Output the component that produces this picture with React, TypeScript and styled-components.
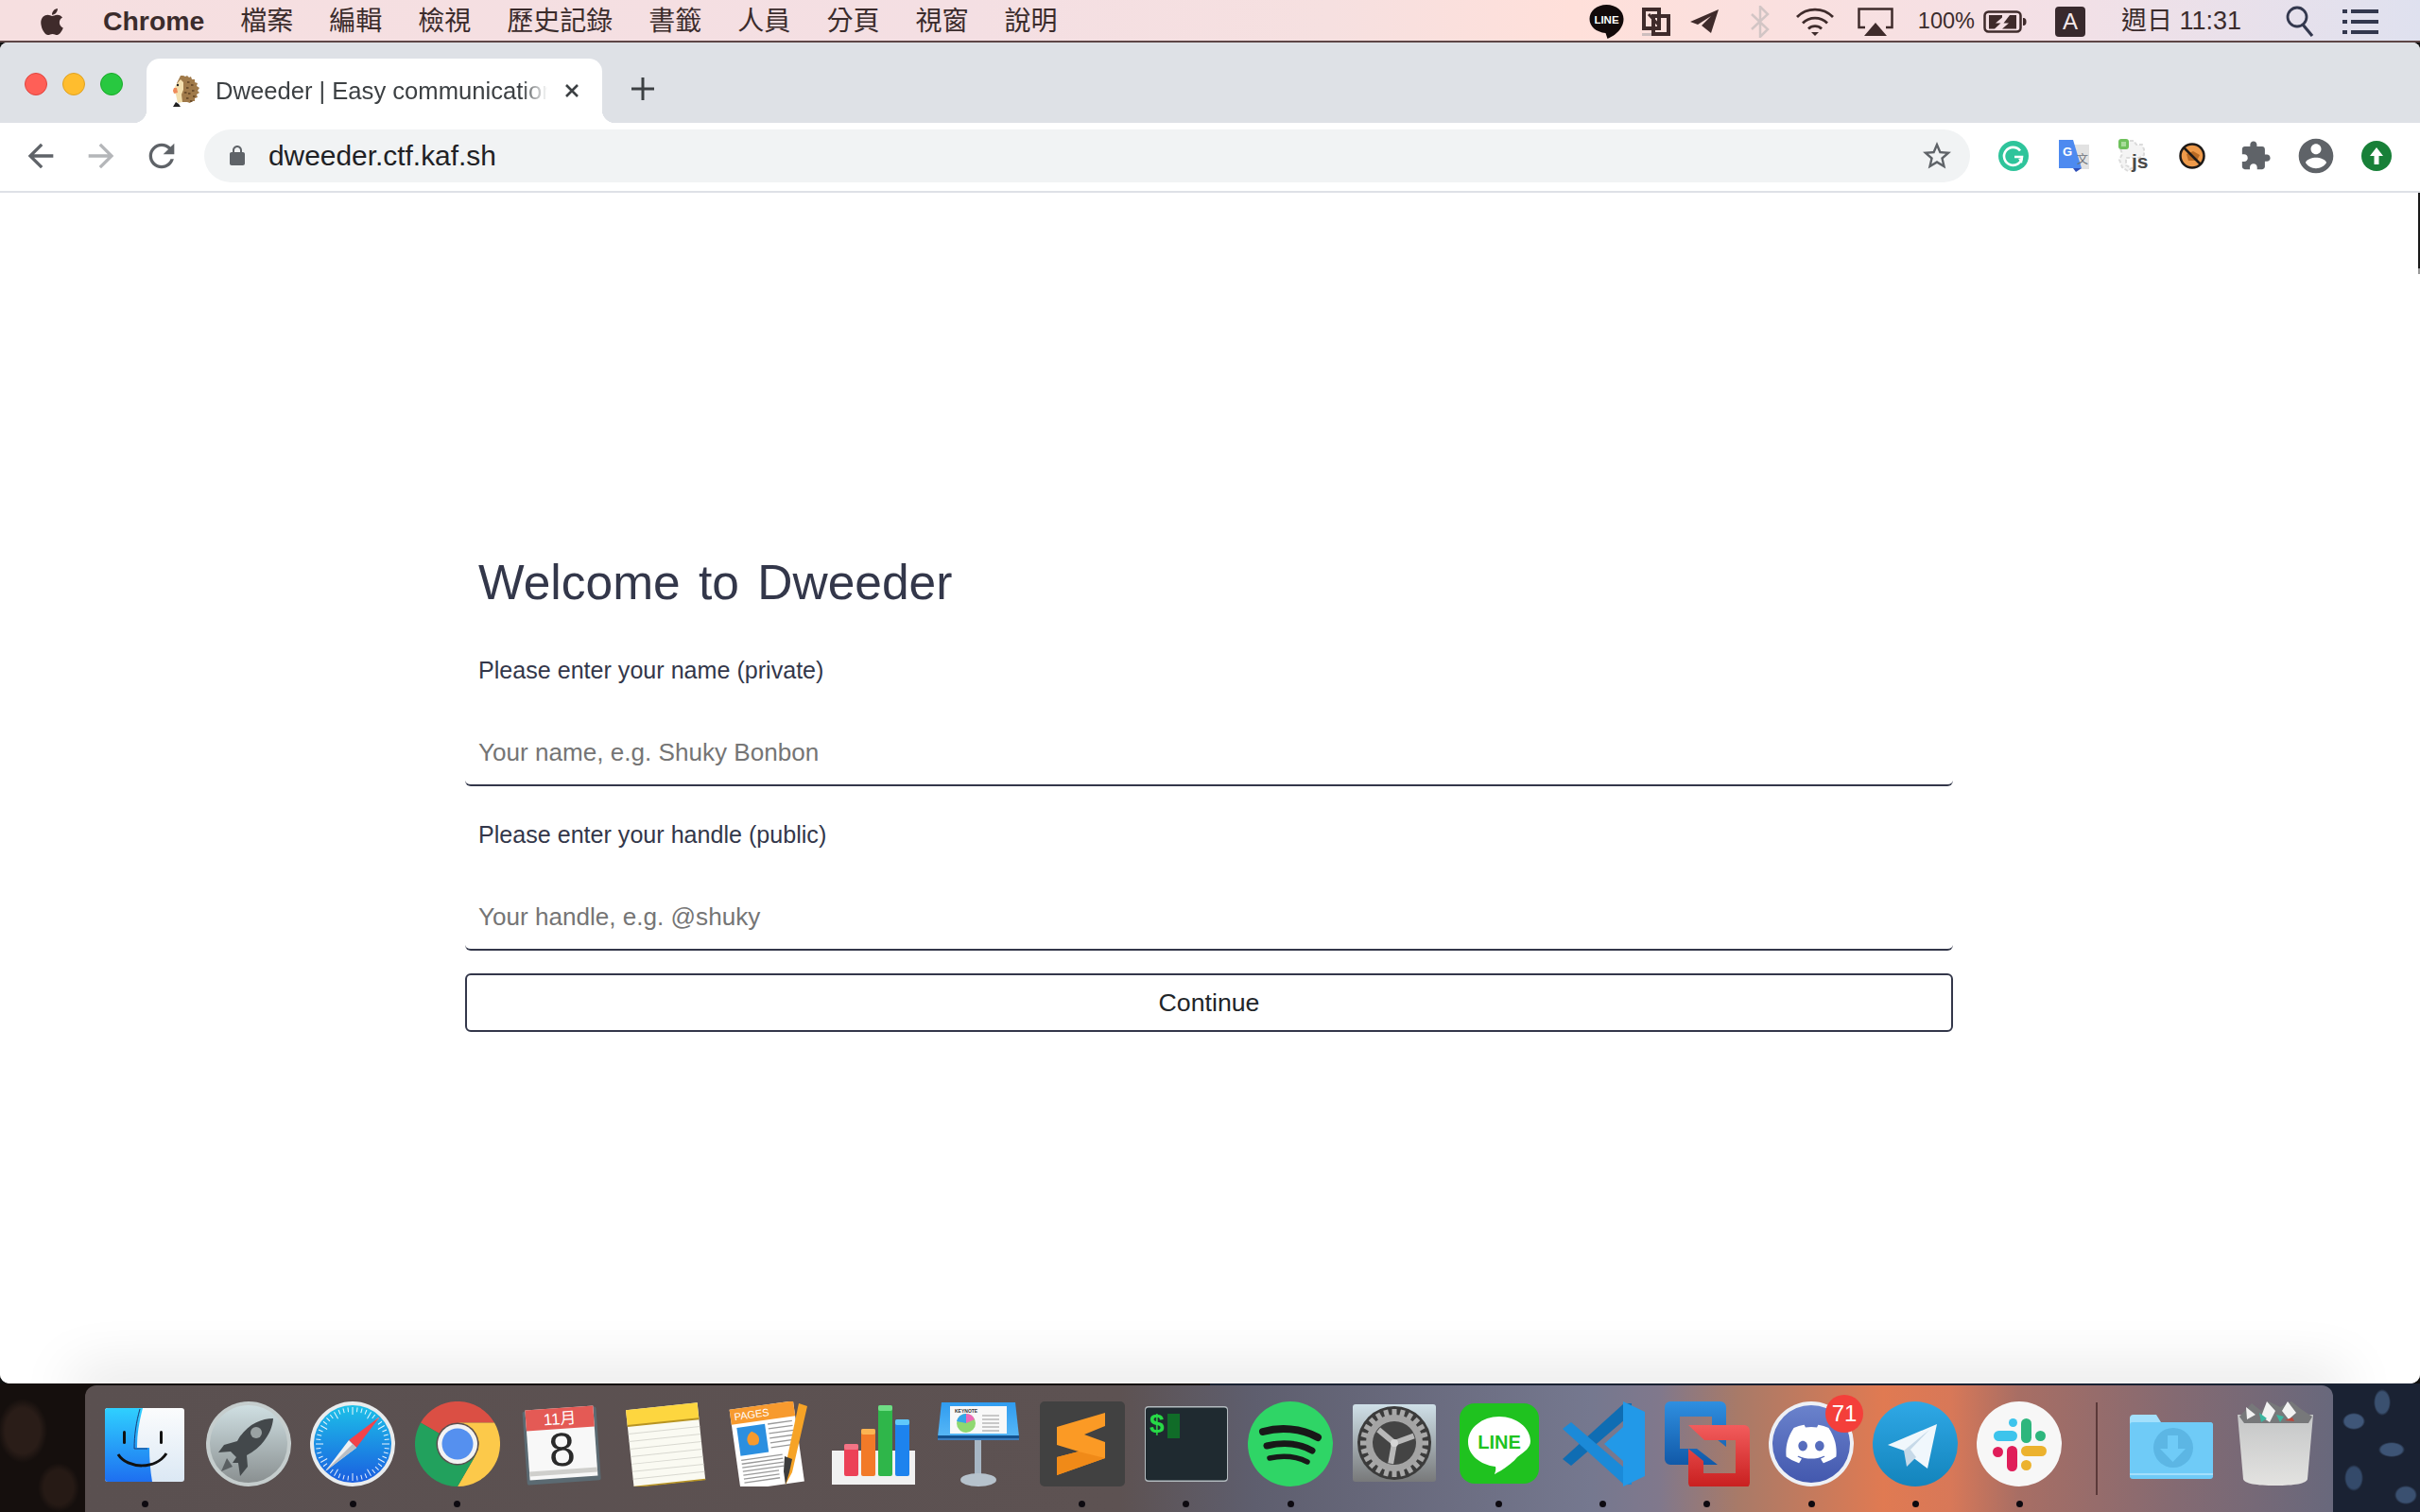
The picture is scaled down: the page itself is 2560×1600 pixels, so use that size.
import React from 'react';
import styled, { createGlobalStyle } from 'styled-components';
import { FaApple, FaDiscord } from 'react-icons/fa';

const SANS = '"Liberation Sans", Arial, sans-serif';
const CJK = '"Liberation Sans", "Noto Sans CJK TC", sans-serif';
const INK = '#33374a';

const Global = createGlobalStyle`
  html, body { margin: 0; padding: 0; background: #111; overflow: hidden; }
  * { box-sizing: border-box; }
  input::placeholder { color: #757575; opacity: 1; }
`;

const Desktop = styled.div`
  width: 2560px; height: 1600px; display: flex; flex-direction: column; overflow: hidden;
  font-family: ${SANS};
`;

/* ---------- mac menu bar ---------- */
const MenuBar = styled.header`
  height: 45px; flex: none; display: flex; align-items: center; padding: 2px 44px 0 39px;
  background: linear-gradient(90deg, #f6dfe0 0%, #f4dfe3 40%, #f6e0e0 55%, #ffe0da 65%, #f3e0e6 85%, #dfe1ef 100%);
  border-bottom: 2px solid #5d4646; color: #3b2c2c;
`;
const MenuLeft = styled.nav`
  display: flex; align-items: center; gap: 38px; font: 28px/43px ${CJK};
`;
const MenuApp = styled.span` font-weight: 700; font-size: 28.4px; `;
const MenuStatus = styled.div` margin-left: auto; display: flex; align-items: center; height: 43px; `;
const StatusItem = styled.span<{ $ml: number }>`
  margin-left: ${p => p.$ml}px; display: flex; align-items: center; line-height: 1;
`;
const StatusText = styled(StatusItem)<{ $size: number }>`
  font: ${p => p.$size}px/43px ${CJK}; white-space: nowrap;
`;
const InputBadge = styled(StatusItem)`
  width: 32px; height: 32px; border-radius: 4px; background: #38292d; color: #f4e8ea;
  font: 24px/32px ${SANS}; justify-content: center;
`;

/* ---------- browser window ---------- */
const Window = styled.section`
  height: 1419px; flex: none; display: flex; flex-direction: column; overflow: hidden;
  border-radius: 8px 8px 10px 10px; background: #fff;
`;
const TabStrip = styled.div`
  height: 85px; flex: none; display: flex; align-items: flex-start; background: #dee1e6;
`;
const Lights = styled.div` display: flex; gap: 16px; padding: 32px 0 0 26px; `;
const Light = styled.span<{ $c: string; $b: string }>`
  width: 24px; height: 24px; border-radius: 50%; background: ${p => p.$c}; border: 1px solid ${p => p.$b};
`;
const Tab = styled.div`
  position: relative; margin: 17px 0 0 25px; width: 482px; height: 68px; background: #fff;
  border-radius: 14px 14px 0 0; display: flex; align-items: center; padding-left: 26px;
  &::before, &::after {
    content: ''; position: absolute; bottom: 0; width: 14px; height: 14px;
  }
  &::before { left: -14px; background: radial-gradient(circle at 0 0, transparent 14px, #fff 14.5px); }
  &::after { right: -14px; background: radial-gradient(circle at 100% 0, transparent 14px, #fff 14.5px); }
`;
const TabTitle = styled.span`
  margin-left: 17px; width: 351px; overflow: hidden; white-space: nowrap; font-size: 25.6px; line-height: 34px;
  color: #3c4043; -webkit-mask-image: linear-gradient(90deg, #000 92%, transparent 100%);
  mask-image: linear-gradient(90deg, #000 92%, transparent 100%);
`;
const TabClose = styled.span` margin-left: 18px; display: flex; `;
const NewTab = styled.span` margin: 36px 0 0 30px; display: flex; `;

const Toolbar = styled.div`
  height: 74px; flex: none; display: flex; align-items: center; padding: 0 0 2px 11px;
  background: #fff; border-bottom: 2px solid #dee1e6;
`;
const NavButton = styled.span` width: 64px; display: flex; justify-content: center; `;
const Omnibox = styled.div`
  margin: 0 14px 0 13px; width: 1868px; height: 56px; border-radius: 28px; background: #f1f3f4;
  display: flex; align-items: center; padding: 0 17px 0 23px;
`;
const Url = styled.span` margin-left: 21px; font-size: 29.9px; color: #202124; flex: 1; `;
const ExtButton = styled.span<{ $nudge?: number }>`
  width: 64px; height: 48px; display: flex; align-items: center; justify-content: center;
  padding-right: ${p => p.$nudge ?? 0}px;
`;

const Page = styled.main`
  position: relative; flex: 1; display: flex; justify-content: center; padding: 382px 2px 0 0; background: #fff;
`;
const ScrollMark = styled.span`
  position: absolute; top: 0; right: 0; width: 2px; height: 86px;
  background: linear-gradient(#1a1a1a 93%, #999 93%);
`;
const DockShadow = styled.span`
  position: absolute; left: 90px; right: 92px; bottom: -12px; height: 12px;
  box-shadow: 0 0 60px 12px rgba(0, 0, 0, 0.13);
`;
const Form = styled.form` width: 1574px; display: flex; flex-direction: column; color: ${INK}; `;
const Heading = styled.h1`
  margin: 0 0 43px 14px; font-size: 51.5px; word-spacing: 5px; line-height: 60px; font-weight: 400;
`;
const FieldLabel = styled.label`
  display: block; margin: 0 0 30px 14px; font-size: 25.1px; line-height: 40px;
`;
const TextInput = styled.input`
  display: block; width: 100%; height: 73px; margin-bottom: 31px; padding: 4px 14px 0; border: 0;
  border-bottom: 2px solid ${INK}; border-radius: 6px; background: #fff; outline: none;
  font: 26.1px ${SANS}; color: ${INK};
`;
const SubmitButton = styled.button`
  margin-top: -7px; height: 62px; border: 2px solid ${INK}; border-radius: 6px; background: #fff;
  font: 26.7px ${SANS}; color: #212529; padding: 0;
`;

/* ---------- dock ---------- */
const Wallpaper = styled.div`
  flex: 1; display: flex; padding: 2px 92px 0 90px; position: relative;
  background:
    radial-gradient(ellipse 26px 34px at 24px 50px, #2a1d18 70%, transparent 100%),
    radial-gradient(ellipse 22px 26px at 62px 110px, #261a15 70%, transparent 100%),
    radial-gradient(ellipse 12px 9px at 2490px 40px, #3f5678 80%, transparent 100%),
    radial-gradient(ellipse 9px 14px at 2520px 20px, #3a506f 80%, transparent 100%),
    radial-gradient(ellipse 14px 8px at 2530px 70px, #3d5475 80%, transparent 100%),
    radial-gradient(ellipse 10px 14px at 2490px 100px, #344a6a 80%, transparent 100%),
    radial-gradient(ellipse 12px 10px at 2545px 118px, #3a5070 80%, transparent 100%),
    linear-gradient(90deg, #150f0d 0%, #150f0d 50%, #1a2233 50%, #1a2233 100%);
`;
const Dock = styled.nav`
  flex: 1; display: flex; align-items: flex-start; padding: 17px 0 0 8px; border-radius: 12px 12px 0 0;
  background: linear-gradient(90deg, #5a5050 0%, #5d5252 46%, #5e5e6e 52%, #75788f 67%, #80788c 70%, #a87a68 73.5%, #e07a52 80%, #d87858 83%, #a86e64 86%, #846a72 93%, #68687c 100%);
`;
const DockCell = styled.div`
  width: 110.2px; flex: none; display: flex; flex-direction: column; align-items: center; gap: 15px;
`;
const DockIconBox = styled.div` position: relative; width: 90px; height: 90px; svg { display: block; } `;
const RunDot = styled.span<{ $on: boolean }>`
  width: 7px; height: 7px; border-radius: 50%; background: ${p => (p.$on ? '#0d0a10' : 'transparent')};
`;
const DockDivider = styled.span`
  width: 2px; height: 98px; margin: 1px 23px 0 25px; background: rgba(60, 30, 30, 0.65); flex: none;
`;
const Badge = styled.span`
  position: absolute; left: 60px; top: -7px; width: 40px; height: 40px; border-radius: 50%;
  background: #f43f3a; color: #fff; font: 24px/40px ${SANS}; text-align: center;
`;

/* ---------- small browser icons ---------- */
const Mat = ({ d, size, color }: { d: string; size: number; color: string }) => (
  <svg width={size} height={size} viewBox="0 0 24 24" fill={color}><path d={d} /></svg>
);
const P = {
  back: 'M20 11H7.83l5.59-5.59L12 4l-8 8 8 8 1.41-1.41L7.83 13H20v-2z',
  fwd: 'M12 4l-1.41 1.41L16.17 11H4v2h12.17l-5.58 5.59L12 20l8-8z',
  reload: 'M17.65 6.35C16.2 4.9 14.21 4 12 4c-4.42 0-7.99 3.58-7.99 8s3.57 8 7.99 8c3.73 0 6.84-2.55 7.73-6h-2.08c-.82 2.33-3.04 4-5.65 4-3.31 0-6-2.69-6-6s2.69-6 6-6c1.66 0 3.14.69 4.22 1.78L13 11h7V4l-2.35 2.35z',
  lock: 'M18 8h-1V6c0-2.76-2.24-5-5-5S7 3.24 7 6v2H6c-1.1 0-2 .9-2 2v10c0 1.1.9 2 2 2h12c1.1 0 2-.9 2-2V10c0-1.1-.9-2-2-2zM9 6c0-1.66 1.34-3 3-3s3 1.34 3 3v2H9V6z',
  star: 'M22 9.24l-7.19-.62L12 2 9.19 8.63 2 9.24l5.46 4.73L5.82 21 12 17.27 18.18 21l-1.63-7.03L22 9.24zM12 15.4l-3.76 2.27 1-4.28-3.32-2.88 4.38-.38L12 6.1l1.71 4.04 4.38.38-3.32 2.88 1 4.28L12 15.4z',
  puzzle: 'M20.5 11H19V7c0-1.1-.9-2-2-2h-4V3.5C13 2.12 11.88 1 10.5 1S8 2.12 8 3.5V5H4c-1.1 0-1.99.9-1.99 2v3.8H3.5c1.49 0 2.7 1.21 2.7 2.7s-1.21 2.7-2.7 2.7H2V20c0 1.1.9 2 2 2h3.8v-1.5c0-1.49 1.21-2.7 2.7-2.7 1.49 0 2.7 1.21 2.7 2.7V22H17c1.1 0 2-.9 2-2v-4h1.5c1.38 0 2.5-1.12 2.5-2.5S21.88 11 20.5 11z',
  user: 'M12 2C6.48 2 2 6.48 2 12s4.48 10 10 10 10-4.48 10-10S17.52 2 12 2zm0 3c1.66 0 3 1.34 3 3s-1.34 3-3 3-3-1.34-3-3 1.34-3 3-3zm0 14.2c-2.5 0-4.71-1.28-6-3.22.03-1.99 4-3.08 6-3.08 1.99 0 5.97 1.09 6 3.08-1.29 1.94-3.5 3.22-6 3.22z',
};

const Hedgehog = () => (
  <svg width="30" height="36" viewBox="0 0 30 36">
    <path d="M13 2l2 1 2-1 2 2 2-1 1 3 3 0 0 3 3 1-1 3 3 2-2 3 2 2-3 2 1 3-3 1 0 3-3 0-2 2-3-1-6 0-2-4 0-10-3-6 4-8z" fill="#a07a4a" />
    <path d="M5 12l5-6 3 3 0 8-2 5 1 8-5 1-2-9-3-4z" fill="#f3dfae" />
    <path d="M3 15l3 0 1 5-4 1-1-3z" fill="#ef8a5a" />
    <path d="M5 30l3 2 2 3-8 0z" fill="#222" />
    <circle cx="7" cy="12" r="1.2" fill="#222" />
    <g fill="#6e4f2c">{[[17, 8], [21, 11], [16, 14], [22, 17], [18, 20], [23, 23], [16, 25], [20, 28], [14, 19]].map(([x, y]) => <rect key={`${x}${y}`} x={x} y={y} width="2.5" height="2" />)}</g>
  </svg>
);

const GrammarlyIcon = () => (
  <svg width="32" height="32" viewBox="0 0 32 32">
    <circle cx="16" cy="16" r="16" fill="#2ec49b" />
    <path d="M23 10.5A9.5 9.5 0 1 0 25 17h-8" fill="none" stroke="#fff" strokeWidth="2.6" />
    <path d="M21 19l5-1-1 6z" fill="#fff" />
  </svg>
);
const TranslateIcon = () => (
  <svg width="32" height="34" viewBox="0 0 32 34">
    <path d="M14 5h18v26H16z" fill="#e2e2e2" />
    <path d="M0 0h15l9 30H0z" fill="#4d8af0" />
    <path d="M15 30h9l-6 4z" fill="#2f4fb8" />
    <text x="4" y="17" fontFamily={SANS} fontSize="13" fontWeight="700" fill="#fff">G</text>
    <text x="19" y="25" fontFamily={CJK} fontSize="12" fill="#6b7078">文</text>
  </svg>
);
const JsIcon = () => (
  <svg width="34" height="36" viewBox="0 0 34 36">
    <path d="M6 2h10l3 4 6 0 2 5 0 6-5 3-14 0 0 8 6 3-4 3-6-4-3-8 3-6-2-6z" fill="#f4f4f4" stroke="#dcdcdc" strokeWidth="2" strokeDasharray="4 2" />
    <rect x="0" y="0" width="11" height="11" rx="3" fill="#6fc15c" />
    <rect x="3" y="3" width="5" height="5" fill="#a9dc9c" />
    <text x="14" y="31" fontFamily={SANS} fontSize="21" fontWeight="700" fill="#4a4a4a">js</text>
  </svg>
);
const BlockIcon = () => (
  <svg width="28" height="28" viewBox="0 0 28 28">
    <circle cx="14" cy="14" r="12.5" fill="#ee9a4a" stroke="#1e1a18" strokeWidth="2.5" />
    <path d="M8 12l7-3 7 4-3 6-9 0z" fill="#b96a24" />
    <path d="M5 5l18 18" stroke="#1e1a18" strokeWidth="2.5" />
  </svg>
);
const UpdateIcon = () => (
  <svg width="32" height="32" viewBox="0 0 32 32">
    <circle cx="16" cy="16" r="16" fill="#188038" />
    <path d="M16 7l7 9h-4.500v9h-5v-9H9z" fill="#fff" />
  </svg>
);

const MenuIcons = {
  Line: () => (
    <svg width="37" height="38" viewBox="0 0 37 38">
      <path d="M18.5 1C8.5 1 .5 7.5.5 16c0 8 7 14 17 15l2 6c5-2 17-9 17-21C36.500 7.500 28.500 1 18.500 1z" fill="#120a0a" />
      <text x="18.500" y="21" textAnchor="middle" fontFamily={SANS} fontSize="11.500" fontWeight="700" fill="#fff">LINE</text>
    </svg>
  ),
  VMware: () => (
    <svg width="30" height="30" viewBox="0 0 30 30">
      <path d="M2 2h16v20H2z M12 9h16v19H12z" fill="none" stroke="#3f2b2b" strokeWidth="4" />
      <path d="M7 7l12 13" stroke="#3f2b2b" strokeWidth="3" />
      <path d="M0 27h10v3H0z" fill="#cdbebe" />
    </svg>
  ),
  Plane: () => (
    <svg width="30" height="25" viewBox="0 0 30 25"><path d="M0 13L30 0 22 25 12 17 22 7 8 16z" fill="#3f2b2b" /></svg>
  ),
  Bluetooth: () => (
    <svg width="22" height="34" viewBox="0 0 22 34"><path d="M2 9l17 16-8 8V1l8 8L2 25" fill="none" stroke="#d2c5c5" strokeWidth="2.500" /></svg>
  ),
  Wifi: () => (
    <svg width="42" height="32" viewBox="0 0 42 32" fill="none" stroke="#3f2b2b" strokeWidth="2.800">
      <path d="M2 11a27 27 0 0 1 38 0M8 17.500a18.500 18.500 0 0 1 26 0M14 23.500a10 10 0 0 1 14 0" />
      <path d="M17 27h8l-4 4z" fill="#3f2b2b" stroke="none" />
    </svg>
  ),
  Airplay: () => (
    <svg width="38" height="30" viewBox="0 0 38 30">
      <path d="M8 21H1.500V1.500h35V21H30" fill="none" stroke="#3f2b2b" strokeWidth="2.500" />
      <path d="M19 16l12 14H7z" fill="#3f2b2b" />
    </svg>
  ),
  Battery: () => (
    <svg width="46" height="24" viewBox="0 0 46 24">
      <rect x="1.500" y="1.500" width="38" height="21" rx="4" fill="none" stroke="#3f2b2b" strokeWidth="2.500" />
      <path d="M6 5h14v2.500l-7 6h5.500L12 19.500H6zM20 19.500l7-6h-5.500l6.500-8.500h7v14.500z" fill="#3f2b2b" />
      <path d="M42 8c3 0 3.500 2 3.500 4s-.5 4-3.500 4z" fill="#3f2b2b" />
    </svg>
  ),
  Search: () => (
    <svg width="30" height="34" viewBox="0 0 30 34" fill="none" stroke="#33384e" strokeWidth="2.800">
      <circle cx="12" cy="12" r="10" /><path d="M18 20l10 12" strokeWidth="3.200" />
    </svg>
  ),
  List: () => (
    <svg width="38" height="26" viewBox="0 0 38 26" fill="#33384e">
      <rect x="0" y="0" width="5" height="4" /><rect x="9" y="0" width="29" height="4" />
      <rect x="0" y="11" width="5" height="4" /><rect x="9" y="11" width="29" height="4" />
      <rect x="0" y="22" width="5" height="4" /><rect x="9" y="22" width="29" height="4" />
    </svg>
  ),
};

/* ---------- dock artwork ---------- */
const Art = ({ children }: { children: React.ReactNode }) => (
  <svg width="90" height="90" viewBox="0 0 90 90">{children}</svg>
);

const Finder = () => (
  <Art>
    <defs>
      <linearGradient id="fb" x1="0" y1="0" x2="0" y2="1"><stop offset="0" stopColor="#2fd0ff" /><stop offset="1" stopColor="#1e6ff0" /></linearGradient>
      <linearGradient id="fw" x1="0" y1="0" x2="0" y2="1"><stop offset="0" stopColor="#fbfcfd" /><stop offset="1" stopColor="#dbe8f4" /></linearGradient>
    </defs>
    <rect x="3" y="7" width="84" height="78" rx="3" fill="url(#fw)" />
    <path d="M6 7h37c-3 12-6 25-6 42h13c0 12 1 24 3 36H6a3 3 0 0 1-3-3V10a3 3 0 0 1 3-3z" fill="url(#fb)" />
    <path d="M40 8c-4 14-6 28-6 42h14" fill="none" stroke="#1b3d78" strokeWidth="1" />
    <rect x="22" y="31" width="3" height="14" rx="1.500" fill="#111" />
    <rect x="61" y="31" width="3" height="14" rx="1.500" fill="#111" />
    <path d="M17 56c10 16 40 16 51-1" fill="none" stroke="#111" strokeWidth="3" />
  </Art>
);
const Launchpad = () => (
  <Art>
    <defs><linearGradient id="lp" x1="0" y1="0" x2="0" y2="1"><stop offset="0" stopColor="#cfdfe2" /><stop offset="1" stopColor="#8a9091" /></linearGradient></defs>
    <circle cx="45" cy="45" r="45" fill="#c5cdcd" />
    <circle cx="45" cy="45" r="41" fill="url(#lp)" />
    <path d="M71 18C58 18 42 25 33 42l-14 4-6 8 13-1 6 6-4 6 6 0 2 14 8-10-1-12c16-8 27-24 28-39z" fill="#43484b" />
    <path d="M22 60l-6 14 12-5z" fill="#5a5f62" />
    <circle cx="53" cy="33" r="6" fill="#9aa2a3" />
  </Art>
);
const Safari = () => (
  <Art>
    <defs><linearGradient id="sf" x1="0" y1="0" x2="0" y2="1"><stop offset="0" stopColor="#1dc0e8" /><stop offset="1" stopColor="#1a5ee0" /></linearGradient></defs>
    <circle cx="45" cy="45" r="45" fill="#e9eced" />
    <circle cx="45" cy="45" r="41" fill="url(#sf)" />
    <g stroke="#fff" strokeWidth="1" opacity="0.9">
      {Array.from({ length: 48 }, (_, i) => (
        <line key={i} x1="45" y1="6" x2="45" y2={i % 4 === 0 ? 14 : 11} transform={`rotate(${i * 7.5} 45 45)`} />
      ))}
    </g>
    <path d="M74 16L49 49 41 41z" fill="#f2424a" />
    <path d="M16 74L41 41 49 49z" fill="#eef0f2" />
    <path d="M16 74L45 45 49 49z" fill="#b9bec4" />
  </Art>
);
const ChromeLogo = () => (
  <Art>
    <path d="M6 22.500A45 45 0 0 1 84 22.500L45 22.500A22.500 22.500 0 0 0 25.500 33.750Z" fill="#db4f44" />
    <path d="M84 22.500A45 45 0 0 1 45 90L64.500 56.250A22.500 22.500 0 0 0 45 22.500Z" fill="#fcc94a" />
    <path d="M45 90A45 45 0 0 1 6 22.500L25.500 33.750A22.500 22.500 0 0 0 64.500 56.250Z" fill="#22a15d" />
    <circle cx="45" cy="45" r="21" fill="#f3f3f3" />
    <circle cx="45" cy="45" r="16.500" fill="#5590ef" />
  </Art>
);
const CalendarIcon = () => (
  <Art>
    <g transform="rotate(-4 45 45)">
      <rect x="6" y="8" width="78" height="78" rx="2" fill="#5b6a72" />
      <rect x="9" y="7" width="72" height="74" fill="#f8f8f8" />
      <rect x="9" y="7" width="72" height="22" fill="#e45a55" />
      <rect x="9" y="72" width="72" height="5" fill="#cfcfcc" />
      <text x="45" y="24" textAnchor="middle" fontFamily={CJK} fontSize="17" fill="#fff">11月</text>
      <text x="45" y="68" textAnchor="middle" fontFamily={'"Liberation Sans", sans-serif'} fontSize="50" fontWeight="400" fill="#2a2a2a">8</text>
    </g>
  </Art>
);
const NotesIcon = () => (
  <Art>
    <g transform="rotate(-6 45 45)">
      <rect x="7" y="5" width="76" height="82" fill="#fafaf2" />
      <rect x="7" y="5" width="76" height="17" fill="#fdd63f" />
      <rect x="7" y="21" width="76" height="2" fill="#b89422" />
      {[30, 38, 46, 54, 62, 70, 78].map(y => <rect key={y} x="7" y={y} width="76" height="1" fill="#d8d8d0" />)}
      <rect x="7" y="86" width="76" height="1.500" fill="#b89422" />
    </g>
  </Art>
);
const PagesIcon = () => (
  <Art>
    <g transform="rotate(-8 40 45)">
      <rect x="8" y="4" width="68" height="86" fill="#fff" />
      <rect x="8" y="4" width="68" height="16" fill="#f79a2e" />
      <text x="12" y="16" fontFamily={SANS} fontSize="11" fill="#fff">PAGES</text>
      <rect x="13" y="24" width="30" height="30" fill="#2b8fe0" />
      <path d="M28 30c6 3 9 8 5 14l-4 1-5-1c-4-6-1-11 4-14z" fill="#f79a2e" />
      {[24, 29, 34, 39, 44, 49].map(y => <rect key={y} x="46" y={y} width="26" height="1.300" fill="#999" />)}
      {[58, 62, 66, 70, 74, 78, 82].map(y => <rect key={y} x="13" y={y} width={y > 70 ? 38 : 44} height="1.300" fill="#999" />)}
    </g>
    <path d="M76 2l9 3-16 70-7 13-1-15z" fill="#f6a326" />
    <path d="M61 58l8 3-3 14-4 13-2-14z" fill="#3d3d3d" />
  </Art>
);
const NumbersIcon = () => (
  <Art>
    <rect x="1" y="52" width="88" height="36" fill="#f1f1f1" />
    {[
      [14, 45, 34, '#ec4157', '#f27485'],
      [32, 29, 50, '#f27a28', '#fbb452'],
      [50, 4, 75, '#2fb64a', '#6fdd85'],
      [68, 19, 60, '#1d83ee', '#60c8fb'],
    ].map(([x, y, h, c, t]) => (
      <g key={String(x)}>
        <rect x={x as number} y={y as number} width="15" height={h as number} rx="2" fill={c as string} />
        <rect x={x as number} y={y as number} width="15" height="6" rx="2" fill={t as string} />
      </g>
    ))}
  </Art>
);
const KeynoteIcon = () => (
  <Art>
    <defs><linearGradient id="kn" x1="0" y1="0" x2="0" y2="1"><stop offset="0" stopColor="#2f9cf0" /><stop offset="1" stopColor="#57b7f6" /></linearGradient></defs>
    <rect x="41" y="36" width="7" height="44" fill="#a7b6c4" />
    <ellipse cx="45" cy="83" rx="19" ry="7" fill="#b6c2cc" />
    <path d="M6 1h78l4 36H2z" fill="url(#kn)" />
    <rect x="2" y="36" width="86" height="3" fill="#14538f" />
    <rect x="2" y="39" width="86" height="2" fill="#3c7cbc" />
    <rect x="15" y="5" width="60" height="29" fill="#f8f8f8" />
    <text x="20" y="12" fontFamily={SANS} fontSize="5" fontWeight="700" fill="#333">KEYNOTE</text>
    <circle cx="32" cy="23" r="10" fill="#8fd870" />
    <path d="M32 23V13a10 10 0 0 1 9 6z" fill="#ee68b8" />
    <path d="M32 23L22 21a10 10 0 0 1 10-8z" fill="#35a5ea" />
    {[14, 18, 22, 26, 30].map(y => <rect key={y} x="49" y={y} width="18" height="2" fill="#c8c8c8" />)}
  </Art>
);
const SublimeIcon = () => (
  <Art>
    <rect width="90" height="90" rx="5" fill="#414141" />
    <path d="M69 12L18 27V46L41 53 18 59V78L69 60V43L47 35 69 26Z" fill="#fb9a25" />
    <path d="M18 59L41 53 69 60 18 78Z" fill="#f08a18" />
  </Art>
);
const TerminalIcon = () => (
  <Art>
    <rect x="1" y="5" width="88" height="80" rx="4" fill="#b4bcc0" />
    <rect x="2" y="6.500" width="86" height="77" rx="3" fill="#1f2a30" />
    <text x="6" y="33" fontFamily={SANS} fontSize="28" fontWeight="700" fill="#27d947">$</text>
    <rect x="25" y="13" width="13" height="26" fill="#106c28" />
  </Art>
);
const SpotifyIcon = () => (
  <Art>
    <circle cx="45" cy="45" r="45" fill="#2fd566" />
    <g fill="none" stroke="#181818" strokeLinecap="round">
      <path d="M16 32c18-5 40-4 58 6" strokeWidth="8" />
      <path d="M20 47c16-4 34-3 48 5" strokeWidth="7" />
      <path d="M23 60c14-3 28-2 40 4" strokeWidth="5.500" />
    </g>
  </Art>
);
const PrefsIcon = () => (
  <Art>
    <defs><linearGradient id="pf" x1="0" y1="0" x2="0" y2="1"><stop offset="0" stopColor="#cfe0e8" /><stop offset="1" stopColor="#78797a" /></linearGradient></defs>
    <rect x="1" y="3" width="88" height="82" rx="3" fill="url(#pf)" />
    <circle cx="45" cy="44" r="39" fill="#3b3b3b" />
    <g fill="#a9a9a9">
      {Array.from({ length: 24 }, (_, i) => (
        <rect key={i} x="42.500" y="8" width="5" height="8" transform={`rotate(${i * 15} 45 44)`} />
      ))}
    </g>
    <circle cx="45" cy="44" r="30" fill="#a4a4a4" />
    <circle cx="45" cy="44" r="23" fill="#444" />
    <g stroke="#b8b8b8" strokeWidth="6">
      <line x1="45" y1="44" x2="45" y2="22" transform="rotate(70 45 44)" />
      <line x1="45" y1="44" x2="45" y2="22" transform="rotate(190 45 44)" />
      <line x1="45" y1="44" x2="45" y2="22" transform="rotate(310 45 44)" />
    </g>
    <circle cx="45" cy="44" r="4" fill="#d5d5d5" />
  </Art>
);
const LineIcon = () => (
  <Art>
    <rect x="3" y="2" width="84" height="85" rx="16" fill="#1fc21f" />
    <path d="M45 16c-18 0-33 12-33 27 0 14 13 24 29 26 1 3-1 8-1 8s16-8 24-18c8-6 14-10 14-17 0-14-15-26-33-26z" fill="#fff" />
    <text x="45" y="50" textAnchor="middle" fontFamily={SANS} fontSize="20" fontWeight="700" fill="#1fc21f">LINE</text>
  </Art>
);
const VSCodeIcon = () => (
  <Art>
    <g transform="translate(2 0)">
      <path d="M0 61l9 7 64-55V2h-8z" fill="#0f6db3" />
      <path d="M0 29l9-7 64 55v11h-8z" fill="#1b8ad8" />
      <path d="M64 0l23 11v68L64 90V63L44 45l20-18z" fill="#2299e8" />
    </g>
  </Art>
);
const VMwareIcon = () => (
  <Art>
    <defs>
      <linearGradient id="vb" x1="0" y1="0" x2="0" y2="1"><stop offset="0" stopColor="#2f8fe0" /><stop offset="1" stopColor="#1159a8" /></linearGradient>
      <linearGradient id="vr" x1="0" y1="0" x2="0" y2="1"><stop offset="0" stopColor="#f25c5c" /><stop offset="1" stopColor="#c81e1e" /></linearGradient>
    </defs>
    <path fillRule="evenodd" d="M6 0h53a6 6 0 0 1 6 6v42L50 36V16H16v34h18l22 17H6a6 6 0 0 1-6-6V6a6 6 0 0 1 6-6z" fill="url(#vb)" />
    <path fillRule="evenodd" d="M25 25h59a6 6 0 0 1 6 6v55a6 6 0 0 1-6 6H31a6 6 0 0 1-6-6V50l16 13v13h34V41H42z" fill="url(#vr)" />
  </Art>
);
const DiscordIcon = () => (
  <Art>
    <defs><linearGradient id="dc" x1="0" y1="0" x2="0" y2="1"><stop offset="0" stopColor="#6a82cc" /><stop offset="1" stopColor="#4358ae" /></linearGradient></defs>
    <circle cx="45" cy="45" r="45" fill="#eef0f5" />
    <circle cx="45" cy="45" r="41" fill="url(#dc)" />
    <FaDiscord x="16" y="16" size={58} color="#fff" />
  </Art>
);
const TelegramIcon = () => (
  <Art>
    <defs><linearGradient id="tg" x1="0" y1="0" x2="0" y2="1"><stop offset="0" stopColor="#2fa8e6" /><stop offset="1" stopColor="#1384bc" /></linearGradient></defs>
    <circle cx="45" cy="45" r="45" fill="url(#tg)" />
    <path d="M68 24L16 46l17 6 25 19z" fill="#f0f7fc" />
    <path d="M33 52l3 17 10-10-6-8 20-21z" fill="#c6d9e8" />
  </Art>
);
const SlackIcon = () => (
  <Art>
    <circle cx="45" cy="45" r="45" fill="#f7f7f7" />
    <g>
      <rect x="34" y="18" width="9" height="9" rx="4.500" fill="#3dc4ec" /><rect x="18" y="31" width="25" height="11" rx="5.500" fill="#3dc4ec" />
      <rect x="47" y="18" width="11" height="26" rx="5.500" fill="#2eb67d" /><rect x="62" y="31" width="11" height="11" rx="5.500" fill="#2eb67d" />
      <rect x="17" y="48" width="11" height="11" rx="5.500" fill="#e01e5a" /><rect x="32" y="47" width="11" height="27" rx="5.500" fill="#e01e5a" />
      <rect x="47" y="47" width="27" height="11" rx="5.500" fill="#ecb22e" /><rect x="47" y="62" width="11" height="11" rx="5.500" fill="#ecb22e" />
    </g>
  </Art>
);
const FolderIcon = () => (
  <Art>
    <path d="M1 18a4 4 0 0 1 4-4h24l5 8h51a4 4 0 0 1 4 4v54H1z" fill="#a3e0fc" />
    <rect x="1" y="22" width="88" height="60" rx="3" fill="#6fcbf7" />
    <rect x="1" y="76" width="88" height="2" fill="#a3e0fc" />
    <circle cx="47" cy="49" r="21" fill="#5cb6e4" />
    <path d="M41 36h11v14h8L46.500 64 33 50h8z" fill="#6fcbf7" />
  </Art>
);
const TrashIcon = () => (
  <Art>
    <defs><linearGradient id="tr" x1="0" y1="0" x2="0" y2="1"><stop offset="0" stopColor="#c9cbcb" /><stop offset="1" stopColor="#e9e9e6" /></linearGradient></defs>
    <path d="M5 14l6 68c1 5 14 7 34 7s33-2 34-7l6-68z" fill="url(#tr)" opacity="0.95" />
    <path d="M7 16L20 2l10 8 8-10 12 6 12-6 10 8 12 8-4 7H12z" fill="#77787a" />
    <path d="M14 6l10 8-9 5zM36 0l9 10-6 12-9-6zM58 0l9 12-8 7-7-9z" fill="#f2f2f2" />
    <path d="M28 12l8 6-6 4zM46 14l8 2-4 6z" fill="#3bb7a0" />
    <path d="M55 20l8-3 2 4z" fill="#c0453a" />
  </Art>
);

const dockApps: { name: string; Icon: React.FC; on: boolean }[] = [
  { name: 'Finder', Icon: Finder, on: true },
  { name: 'Launchpad', Icon: Launchpad, on: false },
  { name: 'Safari', Icon: Safari, on: true },
  { name: 'Chrome', Icon: ChromeLogo, on: true },
  { name: 'Calendar', Icon: CalendarIcon, on: false },
  { name: 'Notes', Icon: NotesIcon, on: false },
  { name: 'Pages', Icon: PagesIcon, on: false },
  { name: 'Numbers', Icon: NumbersIcon, on: false },
  { name: 'Keynote', Icon: KeynoteIcon, on: false },
  { name: 'Sublime', Icon: SublimeIcon, on: true },
  { name: 'Terminal', Icon: TerminalIcon, on: true },
  { name: 'Spotify', Icon: SpotifyIcon, on: true },
  { name: 'Preferences', Icon: PrefsIcon, on: false },
  { name: 'LINE', Icon: LineIcon, on: true },
  { name: 'VS Code', Icon: VSCodeIcon, on: true },
  { name: 'VMware', Icon: VMwareIcon, on: true },
  { name: 'Discord', Icon: DiscordIcon, on: true },
  { name: 'Telegram', Icon: TelegramIcon, on: true },
  { name: 'Slack', Icon: SlackIcon, on: true },
];

const menus = ['檔案', '編輯', '檢視', '歷史記錄', '書籤', '人員', '分頁', '視窗', '說明'];

export default function App() {
  return (
    <Desktop>
      <Global />
      <MenuBar>
        <MenuLeft>
          <FaApple size={32} color="#3f2b2b" />
          <MenuApp>Chrome</MenuApp>
          {menus.map(m => <span key={m}>{m}</span>)}
        </MenuLeft>
        <MenuStatus>
          <StatusItem $ml={0}><MenuIcons.Line /></StatusItem>
          <StatusItem $ml={19}><MenuIcons.VMware /></StatusItem>
          <StatusItem $ml={21}><MenuIcons.Plane /></StatusItem>
          <StatusItem $ml={33}><MenuIcons.Bluetooth /></StatusItem>
          <StatusItem $ml={26}><MenuIcons.Wifi /></StatusItem>
          <StatusItem $ml={24}><MenuIcons.Airplay /></StatusItem>
          <StatusText $ml={26} $size={23.5}>100%</StatusText>
          <StatusItem $ml={9}><MenuIcons.Battery /></StatusItem>
          <InputBadge $ml={30}>A</InputBadge>
          <StatusText $ml={38} $size={27}>週日 11:31</StatusText>
          <StatusItem $ml={47}><MenuIcons.Search /></StatusItem>
          <StatusItem $ml={30}><MenuIcons.List /></StatusItem>
        </MenuStatus>
      </MenuBar>
      <Window>
        <TabStrip>
          <Lights>
            <Light $c="#ff5f57" $b="#e0443e" />
            <Light $c="#ffbd2e" $b="#dea123" />
            <Light $c="#28c840" $b="#1aab29" />
          </Lights>
          <Tab>
            <Hedgehog />
            <TabTitle>Dweeder | Easy communication</TabTitle>
            <TabClose>
              <svg width="16" height="16" viewBox="0 0 16 16"><path d="M2 2l12 12M14 2L2 14" stroke="#3c4043" strokeWidth="2.600" /></svg>
            </TabClose>
          </Tab>
          <NewTab>
            <svg width="26" height="26" viewBox="0 0 26 26"><path d="M13 1v24M1 13h24" stroke="#3c4043" strokeWidth="3" /></svg>
          </NewTab>
        </TabStrip>
        <Toolbar>
          <NavButton><Mat d={P.back} size={40} color="#5f6368" /></NavButton>
          <NavButton><Mat d={P.fwd} size={40} color="#b4b6b9" /></NavButton>
          <NavButton><Mat d={P.reload} size={40} color="#5f6368" /></NavButton>
          <Omnibox>
            <Mat d={P.lock} size={24} color="#5f6368" />
            <Url>dweeder.ctf.kaf.sh</Url>
            <Mat d={P.star} size={36} color="#5f6368" />
          </Omnibox>
          <ExtButton><GrammarlyIcon /></ExtButton>
          <ExtButton><TranslateIcon /></ExtButton>
          <ExtButton><JsIcon /></ExtButton>
          <ExtButton $nudge={6}><BlockIcon /></ExtButton>
          <ExtButton><Mat d={P.puzzle} size={34} color="#5f6368" /></ExtButton>
          <ExtButton><Mat d={P.user} size={44} color="#5f6368" /></ExtButton>
          <ExtButton><UpdateIcon /></ExtButton>
        </Toolbar>
        <Page>
          <ScrollMark />
          <Form onSubmit={e => e.preventDefault()}>
            <Heading>Welcome to Dweeder</Heading>
            <FieldLabel htmlFor="name">Please enter your name (private)</FieldLabel>
            <TextInput id="name" placeholder="Your name, e.g. Shuky Bonbon" />
            <FieldLabel htmlFor="handle">Please enter your handle (public)</FieldLabel>
            <TextInput id="handle" placeholder="Your handle, e.g. @shuky" />
            <SubmitButton type="submit">Continue</SubmitButton>
          </Form>
          <DockShadow />
        </Page>
      </Window>
      <Wallpaper>
        <Dock>
          {dockApps.map(({ name, Icon, on }) => (
            <DockCell key={name} title={name}>
              <DockIconBox>
                <Icon />
                {name === 'Discord' && <Badge>71</Badge>}
              </DockIconBox>
              <RunDot $on={on} />
            </DockCell>
          ))}
          <DockDivider />
          <DockCell title="Downloads"><DockIconBox><FolderIcon /></DockIconBox><RunDot $on={false} /></DockCell>
          <DockCell title="Trash"><DockIconBox><TrashIcon /></DockIconBox><RunDot $on={false} /></DockCell>
        </Dock>
      </Wallpaper>
    </Desktop>
  );
}
